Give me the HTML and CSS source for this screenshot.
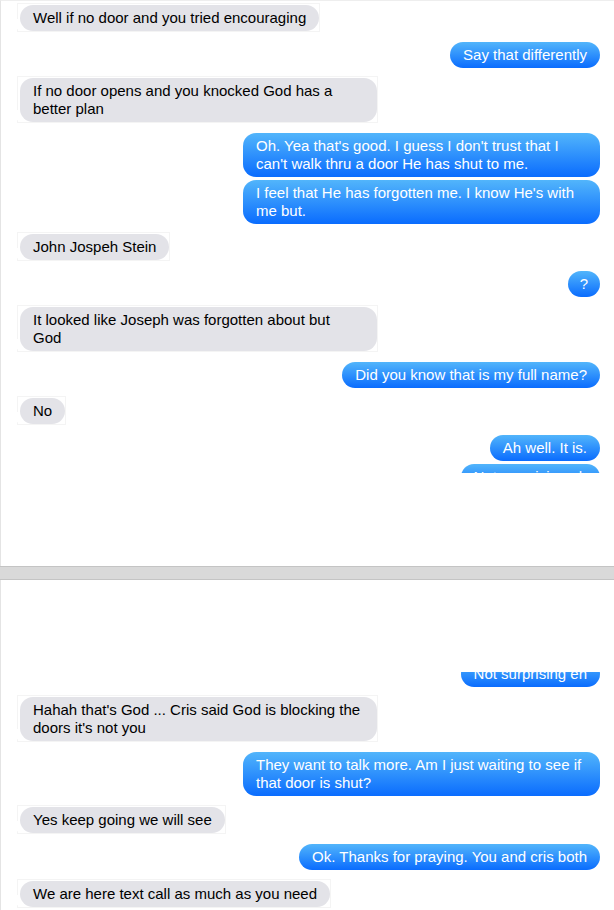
FILE: index.html
```html
<!DOCTYPE html>
<html lang="en">
<head>
    <meta charset="UTF-8">
    <meta name="viewport" content="width=device-width, initial-scale=1.0">
    <title>Messages</title>
    <link rel="stylesheet" href="styles.css">
</head>
<body>
    <section class="shot shot-top">
        <div class="thread">
            <div class="row in"><div class="frame"><p class="bubble tail">Well if no door and you tried encouraging</p></div></div>
            <div class="row out"><p class="bubble tail">Say that differently</p></div>
            <div class="row in"><div class="frame"><p class="bubble tail">If no door opens and you knocked God has a better plan</p></div></div>
            <div class="row out"><p class="bubble">Oh. Yea that's good. I guess I don't trust that I can't walk thru a door He has shut to me.</p></div>
            <div class="row out"><p class="bubble tail">I feel that He has forgotten me. I know He's with me but.</p></div>
            <div class="row in"><div class="frame"><p class="bubble tail">John Jospeh Stein</p></div></div>
            <div class="row out"><p class="bubble tail short">?</p></div>
            <div class="row in"><div class="frame"><p class="bubble tail wide">It looked like Joseph was forgotten about but<br>God</p></div></div>
            <div class="row out"><p class="bubble tail">Did you know that is my full name?</p></div>
            <div class="row in"><div class="frame"><p class="bubble tail">No</p></div></div>
            <div class="row out"><p class="bubble">Ah well. It is.</p></div>
            <div class="row out"><p class="bubble tail">Not surprising eh</p></div>
        </div>
    </section>

    <div class="divider"></div>

    <section class="shot shot-bottom">
        <div class="thread">
            <div class="row out"><p class="bubble tail">Not surprising eh</p></div>
            <div class="row in"><div class="frame"><p class="bubble tail">Hahah that's God ... Cris said God is blocking the doors it's not you</p></div></div>
            <div class="row out"><p class="bubble tail">They want to talk more. Am I just waiting to see if that door is shut?</p></div>
            <div class="row in"><div class="frame"><p class="bubble tail">Yes keep going we will see</p></div></div>
            <div class="row out"><p class="bubble tail">Ok. Thanks for praying. You and cris both</p></div>
            <div class="row in"><div class="frame"><p class="bubble tail">We are here text call as much as you need</p></div></div>
        </div>
    </section>
</body>
</html>
```

FILE: styles.css
```css
body, html {
    margin: 0;
    width: 614px;
    height: 910px;
    overflow: hidden;
    background-color: #ffffff;
    font-family: "Liberation Sans", Arial, sans-serif;
    font-size: 15px;
}

.shot {
    box-sizing: border-box;
    border-left: 1px solid #e4e4e4;
}

.shot-top {
    height: 566px;
    border-top: 1px solid #eeeeee;
}

.shot-bottom {
    height: 330px;
    padding-top: 92px;
}

.thread {
    box-sizing: border-box;
    overflow: hidden;
    padding: 0 14px 0 16px;
}

.shot-top .thread {
    height: 472px;
    padding-top: 2px;
}

.shot-bottom .thread {
    height: 238px;
}

.row {
    display: flex;
}

.row.in {
    justify-content: flex-start;
    margin-top: 8px;
}

.row.out {
    justify-content: flex-end;
    margin-top: 10px;
}

.row.out + .row.out {
    margin-top: 3px;
}

.shot-top .row:first-child {
    margin-top: 0;
}

.shot-bottom .row:first-child {
    margin-top: -11px;
}

.shot-bottom .row.in ~ .row.in {
    margin-top: 9px;
}

/* faint box left around the incoming bubbles */
.frame {
    border: 1px solid #f4f4f4;
    padding: 1px 0 0 2px;
}

.bubble {
    position: relative;
    box-sizing: border-box;
    max-width: 357px;
    margin: 0;
    padding: 4px 13px;
    line-height: 18px;
    border-radius: 13px;
}

.bubble.wide {
    width: 357px;
}

.in .bubble {
    background-color: #e3e3e8;
    color: #000000;
}

.out .bubble {
    background: linear-gradient(#52b5fb, #0a6cfe);
    color: #ffffff;
}

.bubble.short {
    padding: 4px 12px;
}

.bubble.tail::before,
.bubble.tail::after {
    content: "";
    position: absolute;
    bottom: 0;
    height: 12px;
}

.out .bubble.tail::before {
    right: -4px;
    width: 14px;
    background-color: #0a6cfe;
    border-bottom-left-radius: 12px 10px;
    z-index: -1;
}

.out .bubble.tail::after {
    right: -10px;
    width: 10px;
    background-color: #ffffff;
    border-bottom-left-radius: 7px;
    z-index: 1;
}

.in .bubble.tail::before {
    left: -4px;
    width: 14px;
    background-color: #e3e3e8;
    border-bottom-right-radius: 12px 10px;
    z-index: -1;
}

.in .bubble.tail::after {
    left: -10px;
    width: 10px;
    background-color: #ffffff;
    border-bottom-right-radius: 7px;
    z-index: 1;
}

.divider {
    box-sizing: border-box;
    height: 14px;
    background-color: #d9d9d9;
    border-top: 1px solid #c4c4c4;
    border-bottom: 1px solid #c4c4c4;
}
```
